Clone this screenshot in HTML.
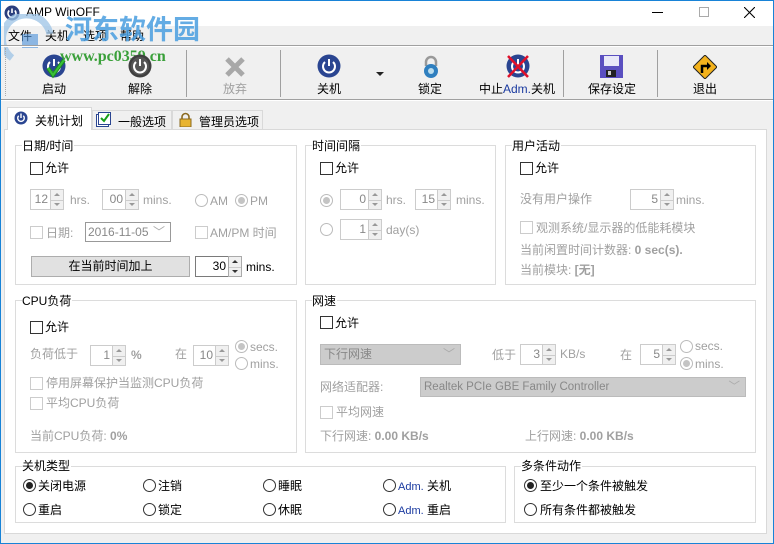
<!DOCTYPE html>
<html><head><meta charset="utf-8"><style>
*{box-sizing:border-box;margin:0;padding:0}
body{width:774px;height:544px;position:relative;overflow:hidden;background:#f0f0f0;font-family:"Liberation Sans","Noto Sans CJK SC",sans-serif;font-size:12px;color:#000}
.a{position:absolute;white-space:nowrap}
.t{position:absolute;white-space:nowrap;line-height:14px}
.g{color:#a0a0a0}
.cb{position:absolute;width:13px;height:13px;border:1px solid #333;background:#fff}
.cbd{position:absolute;width:13px;height:13px;border:1px solid #ccc;background:#fff}
.rd{position:absolute;width:13px;height:13px;border:1px solid #bbb;border-radius:50%;background:#fff}
.rd.on::after{content:"";position:absolute;left:2px;top:2px;width:7px;height:7px;border-radius:50%;background:#c4c4c4}
.rk{position:absolute;width:13px;height:13px;border:1px solid #333;border-radius:50%;background:#fff}
.rk.on::after{content:"";position:absolute;left:2px;top:2px;width:7px;height:7px;border-radius:50%;background:#222}
.box{position:absolute;border:1px solid #ccc;background:#fff;text-align:right;padding-right:2px;line-height:18px;color:#888;font-size:12px}
.bx2{border-color:#7a7a7a;color:#000}
.sp{position:absolute;width:14px;border:1px solid #ccc;background:#f0f0f0}
.sp i{position:absolute;left:3px;width:0;height:0;border-left:3px solid transparent;border-right:3px solid transparent}
.sp .u{top:3px;border-bottom:3px solid #999}
.sp .d{bottom:3px;border-top:3px solid #999}
.sp::after{content:"";position:absolute;left:0;right:0;top:50%;border-top:1px solid #ccc}
.grp{position:absolute;border:1px solid #dcdcdc}
.lg{position:absolute;background:#fff;padding-right:1px;line-height:14px;font-size:12px}
.tb{position:absolute;top:80px;width:90px;text-align:center;font-size:12px}
.sep{position:absolute;top:50px;width:1px;height:47px;background:#a0a0a0}
</style></head><body>
<div class="a" style="left:0;top:0;width:774px;height:544px;border:1px solid #1883d7"></div>
<div class="a" style="left:1px;top:1px;width:772px;height:25px;background:#fff"></div>
<svg class="a" style="left:4px;top:5px" width="16" height="16"><circle cx="8" cy="8" r="7.5" fill="#2b3f7e"/><path d="M5.2 5.5A4 4 0 1 0 10.8 5.5" stroke="#fff" stroke-width="1.6" fill="none"/><line x1="8" y1="3.5" x2="8" y2="8" stroke="#fff" stroke-width="1.6"/></svg>
<div class="t" style="left:26px;top:5px;font-size:12px">AMP WinOFF</div>
<div class="a" style="left:652px;top:12px;width:11px;height:1px;background:#000"></div>
<div class="a" style="left:699px;top:7px;width:10px;height:10px;border:1px solid #aaa"></div>
<svg class="a" style="left:744px;top:7px" width="11" height="11"><path d="M0 0L11 11M11 0L0 11" stroke="#000" stroke-width="1.1"/></svg>
<div class="t" style="left:8px;top:29px">文件</div>
<div class="t" style="left:45px;top:29px">关机</div>
<div class="t" style="left:83px;top:29px">选项</div>
<div class="t" style="left:120px;top:29px">帮助</div>
<svg class="a" style="left:4px;top:14px" width="52" height="52"><path d="M8 44 A24 24 0 1 1 46 20" stroke="#9cc3e6" stroke-width="7" fill="none" opacity=".75"/><rect x="18" y="20" width="16" height="14" fill="#4a90d9" opacity=".6"/></svg>
<div class="t" style="left:65px;top:12px;font-size:27px;line-height:32px;font-weight:bold;color:#4a9ee0;opacity:.85;font-family:'Noto Sans CJK SC',sans-serif">河东软件园</div>
<div class="t" style="left:60px;top:48px;font-size:16px;line-height:18px;font-weight:bold;color:#3aa03a;font-family:'Liberation Serif',serif">www.pc0359.cn</div>
<div class="a" style="left:1px;top:45px;width:772px;height:2px;border-top:1px solid #a0a0a0;background:#fff"></div>
<div class="a" style="left:1px;top:99px;width:772px;height:2px;border-top:1px solid #a0a0a0;border-bottom:1px solid #fff"></div>
<div class="a" style="left:5px;top:48px;height:48px;border-left:1px dotted #aaa"></div>
<div class="sep" style="left:186px"></div><div class="sep" style="left:280px"></div><div class="sep" style="left:563px"></div><div class="sep" style="left:657px"></div>
<svg class="a" style="left:42px;top:54px" width="26" height="26"><circle cx="12" cy="12" r="11.5" fill="#2a4591"/><path d="M8 8A6 6 0 1 0 16 8" stroke="#fff" stroke-width="2" fill="none"/><line x1="12" y1="5" x2="12" y2="12" stroke="#fff" stroke-width="2"/><path d="M6 14l5 7 11-15" stroke="#1a8a1a" stroke-width="4" fill="none"/><path d="M6 14l5 7 11-15" stroke="#38c038" stroke-width="2" fill="none"/></svg>
<svg class="a" style="left:128px;top:54px" width="26" height="26"><circle cx="12" cy="12" r="11.5" fill="#404040"/><circle cx="12" cy="12" r="9" fill="#555"/><path d="M8 8A6 6 0 1 0 16 8" stroke="#fff" stroke-width="2" fill="none"/><line x1="12" y1="5" x2="12" y2="12" stroke="#fff" stroke-width="2"/></svg>
<svg class="a" style="left:224px;top:56px" width="22" height="22"><path d="M3 3L19 19M19 3L3 19" stroke="#a8a8a8" stroke-width="5"/></svg>
<svg class="a" style="left:317px;top:54px" width="26" height="26"><circle cx="12" cy="12" r="11.5" fill="#2a4591"/><path d="M8 8A6 6 0 1 0 16 8" stroke="#fff" stroke-width="2" fill="none"/><line x1="12" y1="5" x2="12" y2="12" stroke="#fff" stroke-width="2"/></svg>
<div class="a" style="left:376px;top:72px;border-left:4px solid transparent;border-right:4px solid transparent;border-top:4px solid #222"></div>
<svg class="a" style="left:421px;top:54px" width="20" height="26"><path d="M5 12V8a5 5 0 0 1 10 0v4" stroke="#999" stroke-width="2.5" fill="none"/><circle cx="10" cy="17" r="7" fill="#2f7fbf"/><circle cx="10" cy="17" r="3" fill="#bde"/></svg>
<svg class="a" style="left:505px;top:54px" width="26" height="26"><circle cx="13" cy="12" r="11.5" fill="#2a4591"/><path d="M9 8A6 6 0 1 0 17 8" stroke="#fff" stroke-width="2" fill="none"/><line x1="13" y1="5" x2="13" y2="12" stroke="#fff" stroke-width="2"/><path d="M3 2L23 23M23 2L3 23" stroke="#e0102a" stroke-width="2.5"/></svg>
<svg class="a" style="left:600px;top:55px" width="24" height="24"><rect x="0" y="0" width="23" height="23" fill="#5a4fc0"/><rect x="4" y="1" width="15" height="10" fill="#e8e8f8"/><rect x="6" y="15" width="10" height="7" fill="#222"/><rect x="8" y="16" width="3" height="4" fill="#ccc"/></svg>
<svg class="a" style="left:693px;top:55px" width="24" height="24"><path d="M12 0L24 12L12 24L0 12Z" fill="#f3b21c" stroke="#222"/><path d="M9 18V11h6" stroke="#000" stroke-width="2.5" fill="none"/><path d="M14 7l4 4-4 4z" fill="#000"/></svg>
<div class="tb" style="left:9px">启动</div>
<div class="tb" style="left:95px">解除</div>
<div class="tb g" style="left:190px">放弃</div>
<div class="tb" style="left:284px">关机</div>
<div class="tb" style="left:385px">锁定</div>
<div class="tb" style="left:467px;width:100px">中止<span style="color:#1a3aa0">Adm.</span>关机</div>
<div class="tb" style="left:567px">保存设定</div>
<div class="tb" style="left:660px">退出</div>
<div class="a" style="left:4px;top:129px;width:763px;height:405px;background:#fff;border:1px solid #d9d9d9"></div>
<div class="a" style="left:7px;top:107px;width:85px;height:23px;background:#fff;border:1px solid #d9d9d9;border-bottom:none"></div>
<div class="a" style="left:92px;top:110px;width:80px;height:20px;background:#f0f0f0;border:1px solid #d9d9d9"></div>
<div class="a" style="left:172px;top:110px;width:91px;height:20px;background:#f0f0f0;border:1px solid #d9d9d9"></div>
<svg class="a" style="left:14px;top:111px" width="14" height="14"><circle cx="7" cy="7" r="6.5" fill="#2a4591"/><path d="M4.7 4.7A3.3 3.3 0 1 0 9.3 4.7" stroke="#fff" stroke-width="1.4" fill="none"/><line x1="7" y1="2.5" x2="7" y2="7" stroke="#fff" stroke-width="1.4"/></svg>
<div class="t" style="left:35px;top:114px">关机计划</div>
<svg class="a" style="left:96px;top:112px" width="16" height="15"><rect x="0.5" y="2.5" width="12" height="12" fill="#fff" stroke="#2a4591"/><rect x="2.5" y="0.5" width="12" height="12" fill="#fff" stroke="#2a4591"/><path d="M5 6l3 3 5-7" stroke="#18a018" stroke-width="2" fill="none"/></svg>
<div class="t" style="left:118px;top:115px">一般选项</div>
<svg class="a" style="left:179px;top:112px" width="13" height="15"><path d="M3 7V5a3.5 3.5 0 0 1 7 0v2" stroke="#8a6a20" stroke-width="1.6" fill="none"/><rect x="1" y="7" width="11" height="8" fill="#e8b430" stroke="#8a6a20"/></svg>
<div class="t" style="left:199px;top:115px">管理员选项</div>

<div class="grp" style="left:15px;top:145px;width:282px;height:140px"></div>
<div class="lg" style="left:22px;top:139px">日期/时间</div>
<div class="cb" style="left:30px;top:162px"></div><div class="t" style="left:45px;top:161px">允许</div>
<div class="box" style="left:30px;top:189px;width:21px;height:21px">12</div><div class="sp" style="left:50px;top:189px;height:21px"><i class="u"></i><i class="d"></i></div>
<div class="t g" style="left:70px;top:193px">hrs.</div>
<div class="box" style="left:102px;top:189px;width:24px;height:21px">00</div><div class="sp" style="left:125px;top:189px;height:21px"><i class="u"></i><i class="d"></i></div>
<div class="t g" style="left:143px;top:193px">mins.</div>
<div class="rd" style="left:195px;top:194px"></div><div class="t g" style="left:210px;top:194px">AM</div>
<div class="rd on" style="left:235px;top:194px"></div><div class="t g" style="left:250px;top:194px">PM</div>
<div class="cbd" style="left:30px;top:226px"></div><div class="t g" style="left:46px;top:226px">日期:</div>
<div class="a g" style="left:85px;top:222px;width:86px;height:20px;border:1px solid #999;line-height:18px;padding-left:2px;color:#888">2016-11-05<span style="position:absolute;right:5px;top:0;color:#aaa">﹀</span></div>
<div class="cbd" style="left:195px;top:226px"></div><div class="t g" style="left:210px;top:226px">AM/PM 时间</div>
<div class="a" style="left:31px;top:256px;width:159px;height:21px;background:#e1e1e1;border:1px solid #adadad;text-align:center;line-height:19px;font-size:12px">在当前时间加上</div>
<div class="box bx2" style="left:195px;top:256px;width:34px;height:21px">30</div><div class="sp" style="left:228px;top:256px;height:21px;border-color:#aaa"><i class="u" style="border-bottom-color:#333"></i><i class="d" style="border-top-color:#333"></i></div>
<div class="t" style="left:246px;top:260px">mins.</div>

<div class="grp" style="left:305px;top:145px;width:191px;height:140px"></div>
<div class="lg" style="left:312px;top:139px">时间间隔</div>
<div class="cb" style="left:320px;top:162px"></div><div class="t" style="left:335px;top:161px">允许</div>
<div class="rd on" style="left:320px;top:194px"></div>
<div class="box" style="left:340px;top:189px;width:29px;height:21px">0</div><div class="sp" style="left:368px;top:189px;height:21px"><i class="u"></i><i class="d"></i></div>
<div class="t g" style="left:386px;top:193px">hrs.</div>
<div class="box" style="left:415px;top:189px;width:23px;height:21px">15</div><div class="sp" style="left:437px;top:189px;height:21px"><i class="u"></i><i class="d"></i></div>
<div class="t g" style="left:456px;top:193px">mins.</div>
<div class="rd" style="left:320px;top:223px"></div>
<div class="box" style="left:340px;top:219px;width:29px;height:21px">1</div><div class="sp" style="left:368px;top:219px;height:21px"><i class="u"></i><i class="d"></i></div>
<div class="t g" style="left:386px;top:223px">day(s)</div>

<div class="grp" style="left:505px;top:145px;width:251px;height:140px"></div>
<div class="lg" style="left:512px;top:139px">用户活动</div>
<div class="cb" style="left:520px;top:162px"></div><div class="t" style="left:535px;top:161px">允许</div>
<div class="t g" style="left:520px;top:192px">没有用户操作</div>
<div class="box" style="left:630px;top:189px;width:31px;height:21px">5</div><div class="sp" style="left:660px;top:189px;height:21px"><i class="u"></i><i class="d"></i></div>
<div class="t g" style="left:676px;top:193px">mins.</div>
<div class="cbd" style="left:520px;top:221px"></div><div class="t g" style="left:536px;top:221px">观测系统/显示器的低能耗模块</div>
<div class="t g" style="left:520px;top:243px">当前闲置时间计数器: <b>0 sec(s).</b></div>
<div class="t g" style="left:520px;top:263px">当前模块: <b>[无]</b></div>

<div class="grp" style="left:15px;top:300px;width:282px;height:153px"></div>
<div class="lg" style="left:22px;top:294px">CPU负荷</div>
<div class="cb" style="left:30px;top:321px"></div><div class="t" style="left:45px;top:320px">允许</div>
<div class="t g" style="left:30px;top:347px">负荷低于</div>
<div class="box" style="left:90px;top:345px;width:23px;height:21px">1</div><div class="sp" style="left:112px;top:345px;height:21px"><i class="u"></i><i class="d"></i></div>
<div class="t g" style="left:131px;top:348px;font-weight:bold">%</div>
<div class="t g" style="left:175px;top:347px">在</div>
<div class="box" style="left:193px;top:345px;width:23px;height:21px">10</div><div class="sp" style="left:215px;top:345px;height:21px"><i class="u"></i><i class="d"></i></div>
<div class="rd on" style="left:235px;top:340px"></div><div class="t g" style="left:250px;top:340px">secs.</div>
<div class="rd" style="left:235px;top:357px"></div><div class="t g" style="left:250px;top:357px">mins.</div>
<div class="cbd" style="left:30px;top:377px"></div><div class="t g" style="left:46px;top:376px">停用屏幕保护当监测CPU负荷</div>
<div class="cbd" style="left:30px;top:397px"></div><div class="t g" style="left:46px;top:396px">平均CPU负荷</div>
<div class="t g" style="left:30px;top:429px">当前CPU负荷: <b>0%</b></div>

<div class="grp" style="left:305px;top:300px;width:451px;height:153px"></div>
<div class="lg" style="left:312px;top:294px">网速</div>
<div class="cb" style="left:320px;top:316px"></div><div class="t" style="left:335px;top:316px">允许</div>
<div class="a" style="left:320px;top:344px;width:141px;height:21px;background:#cccccc;border:1px solid #bbb;line-height:19px;padding-left:3px;color:#888">下行网速<span style="position:absolute;right:5px;color:#aaa">﹀</span></div>
<div class="t g" style="left:492px;top:348px">低于</div>
<div class="box" style="left:520px;top:344px;width:23px;height:21px">3</div><div class="sp" style="left:542px;top:344px;height:21px"><i class="u"></i><i class="d"></i></div>
<div class="t g" style="left:560px;top:347px">KB/s</div>
<div class="t g" style="left:620px;top:348px">在</div>
<div class="box" style="left:640px;top:344px;width:23px;height:21px">5</div><div class="sp" style="left:662px;top:344px;height:21px"><i class="u"></i><i class="d"></i></div>
<div class="rd" style="left:680px;top:340px"></div><div class="t g" style="left:695px;top:339px">secs.</div>
<div class="rd on" style="left:680px;top:357px"></div><div class="t g" style="left:695px;top:357px">mins.</div>
<div class="t g" style="left:320px;top:380px">网络适配器:</div>
<div class="a" style="left:420px;top:377px;width:326px;height:20px;background:#cccccc;border:1px solid #bbb;line-height:18px;padding-left:3px;color:#888;font-size:11.5px">Realtek PCIe GBE Family Controller<span style="position:absolute;right:5px;color:#aaa">﹀</span></div>
<div class="cbd" style="left:320px;top:406px"></div><div class="t g" style="left:336px;top:405px">平均网速</div>
<div class="t g" style="left:320px;top:429px">下行网速: <b>0.00 KB/s</b></div>
<div class="t g" style="left:525px;top:429px">上行网速: <b>0.00 KB/s</b></div>

<div class="grp" style="left:15px;top:466px;width:491px;height:57px"></div>
<div class="lg" style="left:22px;top:459px">关机类型</div>
<div class="rk on" style="left:23px;top:479px"></div><div class="t" style="left:38px;top:479px">关闭电源</div>
<div class="rk" style="left:143px;top:479px"></div><div class="t" style="left:158px;top:479px">注销</div>
<div class="rk" style="left:263px;top:479px"></div><div class="t" style="left:278px;top:479px">睡眠</div>
<div class="rk" style="left:383px;top:479px"></div><div class="t" style="left:398px;top:479px"><span style="color:#1a3aa0;font-size:11px">Adm.</span> 关机</div>
<div class="rk" style="left:23px;top:503px"></div><div class="t" style="left:38px;top:503px">重启</div>
<div class="rk" style="left:143px;top:503px"></div><div class="t" style="left:158px;top:503px">锁定</div>
<div class="rk" style="left:263px;top:503px"></div><div class="t" style="left:278px;top:503px">休眠</div>
<div class="rk" style="left:383px;top:503px"></div><div class="t" style="left:398px;top:503px"><span style="color:#1a3aa0;font-size:11px">Adm.</span> 重启</div>

<div class="grp" style="left:514px;top:466px;width:242px;height:57px"></div>
<div class="lg" style="left:521px;top:459px">多条件动作</div>
<div class="rk on" style="left:524px;top:479px"></div><div class="t" style="left:540px;top:479px">至少一个条件被触发</div>
<div class="rk" style="left:524px;top:503px"></div><div class="t" style="left:540px;top:503px">所有条件都被触发</div>
</body></html>
